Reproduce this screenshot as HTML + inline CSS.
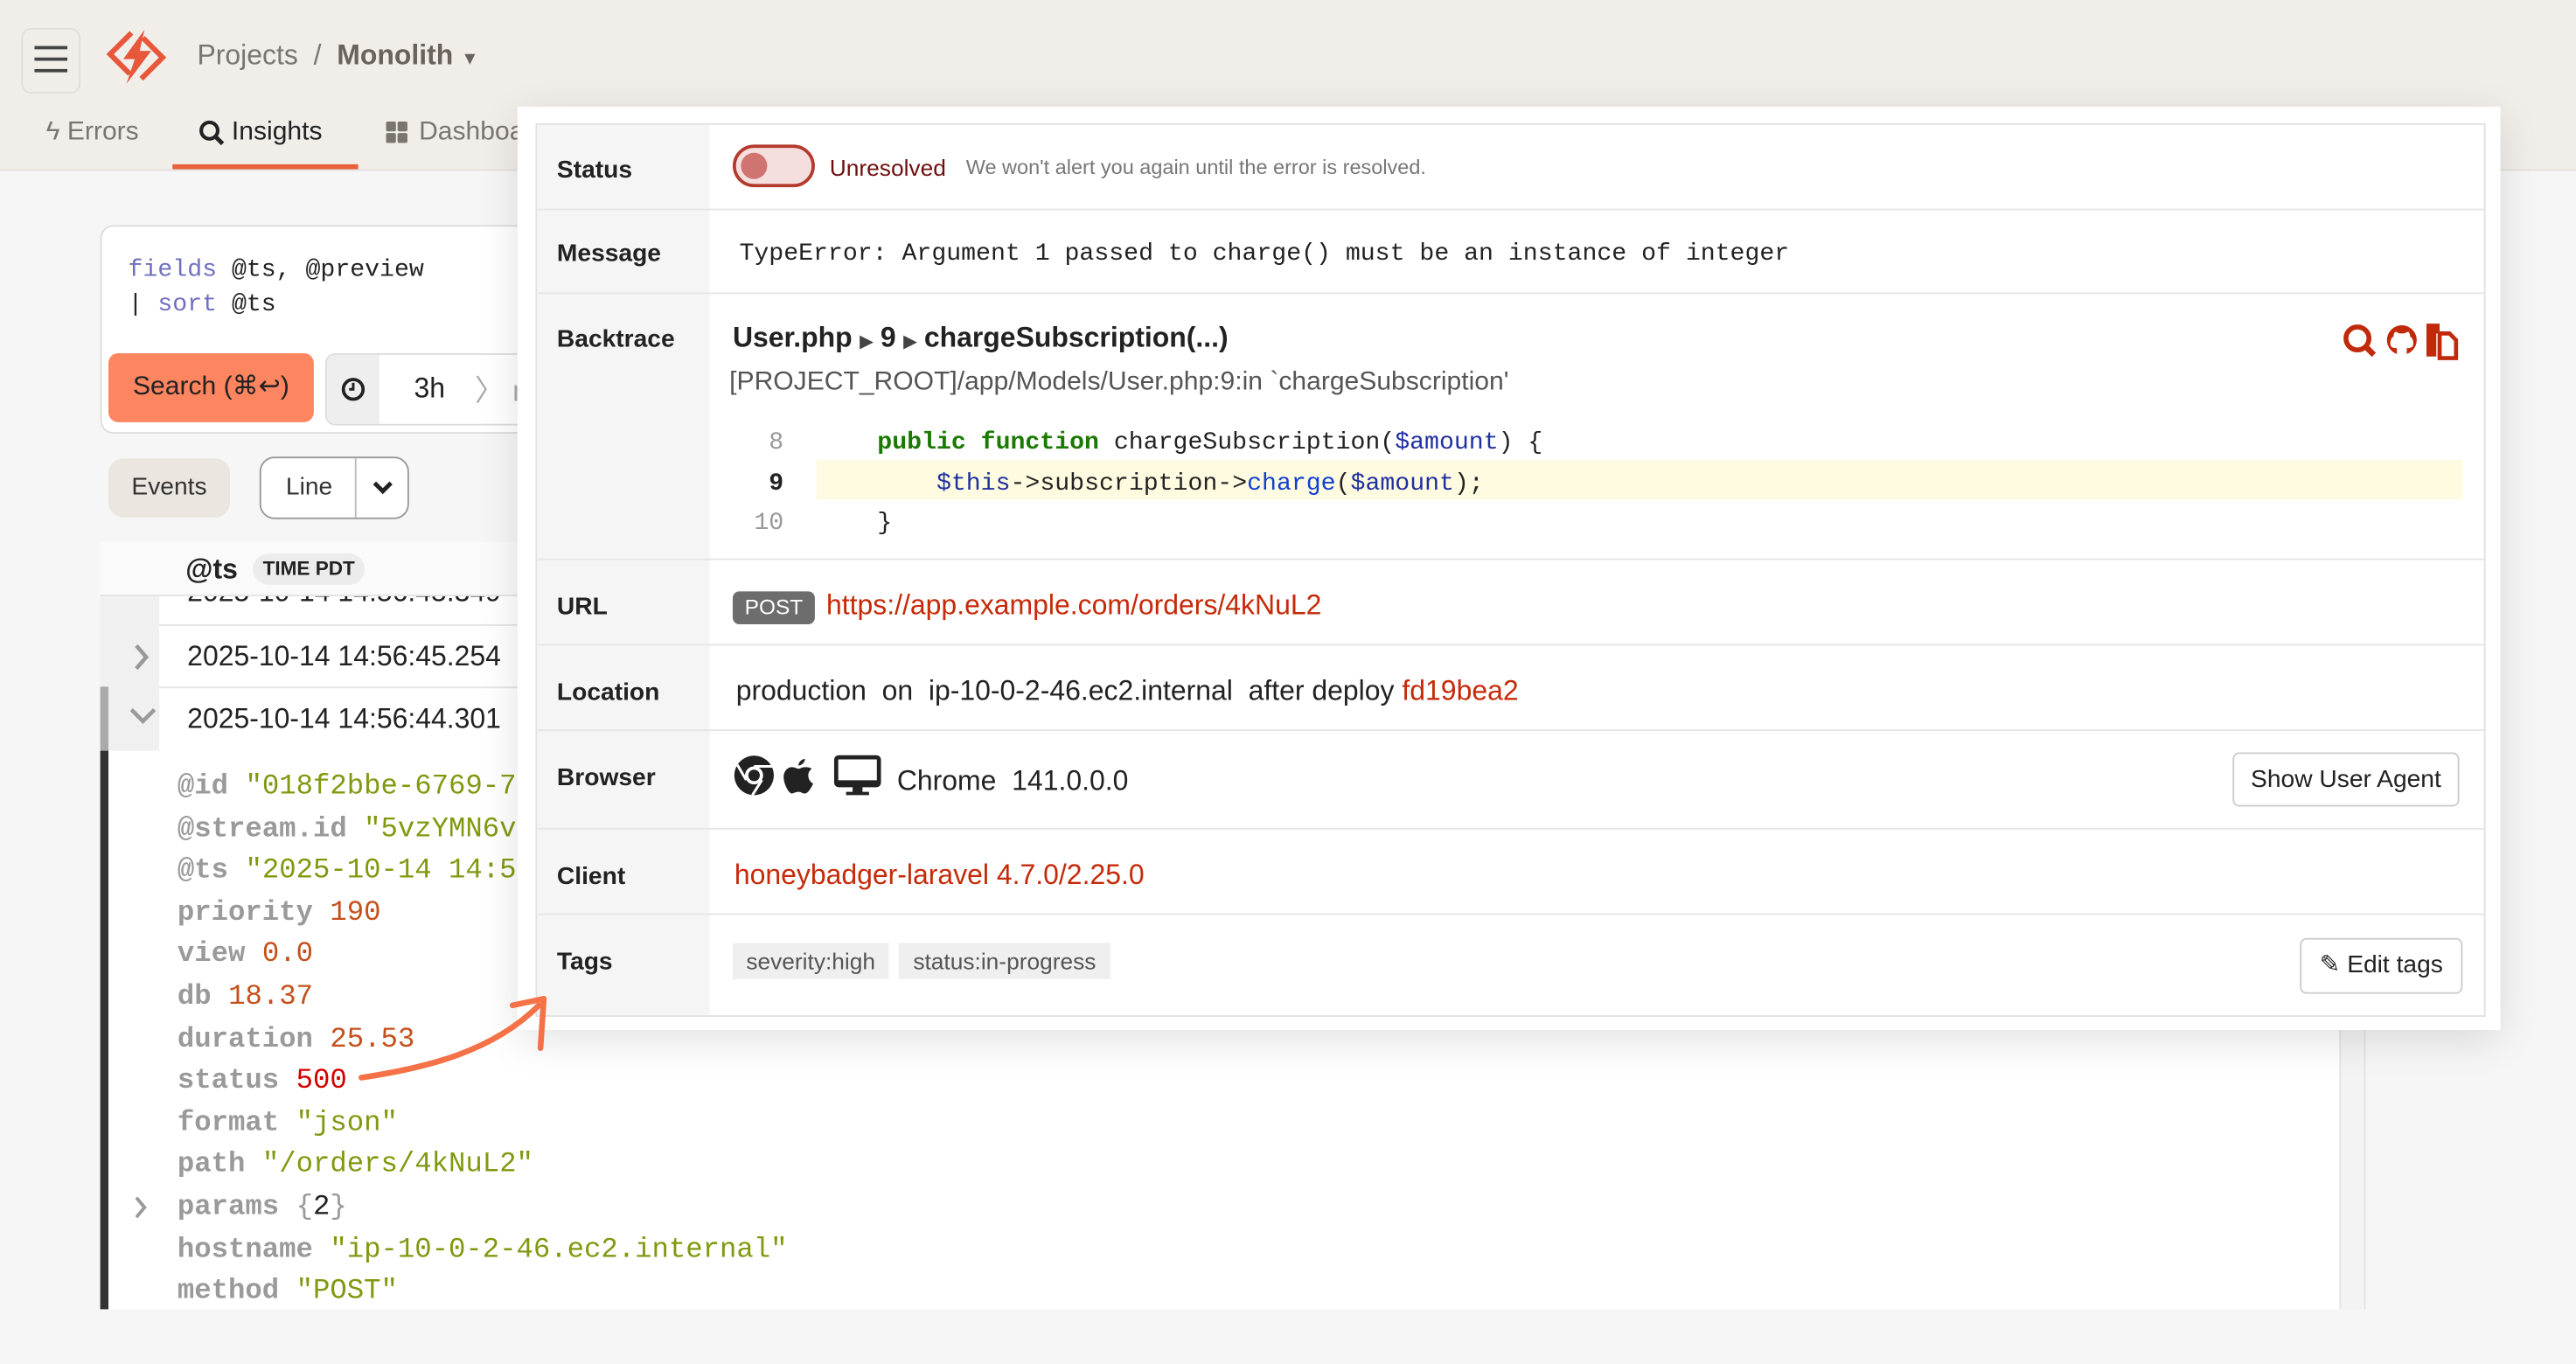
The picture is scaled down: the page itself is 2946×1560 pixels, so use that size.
<!DOCTYPE html>
<html><head><meta charset="utf-8">
<style>
html,body{margin:0;padding:0;width:2946px;height:1560px;overflow:hidden;background:#f6f6f6}
#w{position:absolute;left:0;top:0;width:1568px;height:830px;transform:scale(1.8788);transform-origin:0 0;font-family:"Liberation Sans",sans-serif;color:#222}
.a{position:absolute;white-space:nowrap}
.m{font-family:"Liberation Mono",monospace}
.lbl{position:absolute;left:12px;font-weight:bold;font-size:15px;color:#222}
.row{position:absolute;left:0;right:0;border-bottom:1px solid #e6e6e6}
.k{color:#9a9a9a;font-weight:bold}
.s{color:#7f9a10}
.n{color:#c4501c}
</style></head><body><div id="w">
<!-- header -->
<div class="a" style="left:0;top:0;width:1568px;height:103px;background:#f1eeea;border-bottom:1px solid #e4e0dc"></div>
<div class="a" style="left:13px;top:17px;width:34px;height:38px;border:1px solid #e2ddd8;border-radius:6px;background:#f1eeea"></div>
<div class="a" style="left:21px;top:28px;width:20px;height:2px;background:#444;box-shadow:0 7px 0 #444,0 14px 0 #444"></div>
<svg class="a" style="left:63px;top:14px" width="40" height="40" viewBox="0 0 40 40"><g fill="none" stroke="#e8573a" stroke-width="3.2" stroke-linejoin="miter"><path d="M17 6 L4 19 L16 31"/><path d="M23 34 L36 21 L24 9"/></g><path d="M25 4 L12 22 L19 22 L14 37 L29 17 L22 17 Z" fill="#e8573a"/></svg>
<div class="a" style="left:120px;top:24px;font-size:17px;color:#7b7570">Projects&nbsp; /&nbsp; <b style="color:#6b625c">Monolith</b> <span style="font-size:11px;color:#6b625c">▼</span></div>
<div class="a" style="left:28px;top:72px;font-size:16px;color:#7b7570">ϟ Errors</div>
<svg class="a" style="left:121px;top:73px" width="16" height="16" viewBox="0 0 16 16"><circle cx="6.5" cy="6.5" r="5" fill="none" stroke="#222" stroke-width="2.2"/><path d="M10 10 L14.5 14.5" stroke="#222" stroke-width="2.6"/></svg>
<div class="a" style="left:141px;top:72px;font-size:16px;color:#222">Insights</div>
<div class="a" style="left:105px;top:100px;width:113px;height:3px;background:#e8603c"></div>
<div class="a" style="left:235px;top:74px;width:6px;height:6px;background:#7b7570;border-radius:1px;box-shadow:7px 0 0 #7b7570,0 7px 0 #7b7570,7px 7px 0 #7b7570"></div>
<div class="a" style="left:255px;top:72px;font-size:16px;color:#7b7570">Dashboards</div>
<!-- query box -->
<div class="a" style="left:61px;top:137px;width:400px;height:125px;background:#fff;border:1px solid #ddd;border-radius:8px"></div>
<div class="a m" style="left:78px;top:154px;font-size:15px;line-height:21px;color:#222"><span style="color:#6f6fbf">fields</span> @ts, @preview<br>| <span style="color:#6f6fbf">sort</span> @ts</div>
<div class="a" style="left:66px;top:215px;width:125px;height:42px;background:#fd8560;border-radius:6px;font-size:16px;line-height:42px;text-align:center;color:#222">Search (⌘↩)</div>
<div class="a" style="left:198px;top:215px;width:200px;height:42px;border:1px solid #ddd;border-radius:6px;background:#fff;overflow:hidden"><div style="position:absolute;left:0;top:0;width:32px;height:42px;background:#eee"></div>
<svg style="position:absolute;left:8px;top:13px" width="16" height="16" viewBox="0 0 16 16"><circle cx="8" cy="8" r="6" fill="none" stroke="#222" stroke-width="2"/><path d="M8 4 V8 H5.5" stroke="#222" stroke-width="1.6" fill="none"/></svg>
<div style="position:absolute;left:53px;top:11px;font-size:17px">3h</div><div style="position:absolute;left:90px;top:8px;font-size:18px;color:#aaa">〉 n</div></div>
<div class="a" style="left:66px;top:279px;width:74px;height:36px;background:#ece6e0;border-radius:9px;font-size:15px;line-height:36px;text-align:center;color:#333">Events</div>
<div class="a" style="left:158px;top:278px;width:89px;height:36px;background:#fff;border:1px solid #999;border-radius:9px"><div style="position:absolute;left:15px;top:9px;font-size:15px;color:#333">Line</div><div style="position:absolute;left:57px;top:0;width:1px;height:36px;background:#bbb"></div><svg style="position:absolute;left:67px;top:12px" width="14" height="12" viewBox="0 0 14 12"><path d="M2 3 L7 8 L12 3" fill="none" stroke="#222" stroke-width="2.6"/></svg></div>
<!-- results -->
<div class="a" style="left:61px;top:330px;width:1363px;height:467px;background:#fff"></div>
<div class="a" style="left:1424px;top:330px;width:14px;height:467px;background:#f3f3f3;border-left:1px solid #e4e4e4;border-right:1px solid #e4e4e4"></div>
<div class="a" style="left:61px;top:330px;width:1363px;height:32px;background:#fafafa;border-bottom:1px solid #e4e4e4"></div>
<div class="a" style="left:113px;top:337px;font-size:17px;font-weight:bold">@ts</div>
<div class="a" style="left:154px;top:337px;width:68px;height:19px;background:#ececec;border-radius:10px;font-size:12px;font-weight:bold;line-height:19px;text-align:center">TIME PDT</div>
<div class="a" style="left:61px;top:363px;width:36px;height:94px;background:#f0f0f0"></div>
<div class="a" style="left:114px;top:363px;height:10px;overflow:hidden;width:250px"><div style="position:absolute;left:0;top:-12px;font-size:17px;line-height:20px">2025-10-14 14:56:45.349</div></div>
<div class="a" style="left:97px;top:380px;width:300px;height:1px;background:#e4e4e4"></div>
<div class="a" style="left:97px;top:418px;width:300px;height:1px;background:#e4e4e4"></div>
<svg class="a" style="left:80px;top:391px" width="12" height="18" viewBox="0 0 12 18"><path d="M3 2 L9 9 L3 16" fill="none" stroke="#999" stroke-width="2.4"/></svg>
<div class="a" style="left:114px;top:390px;font-size:17px">2025-10-14 14:56:45.254</div>
<div class="a" style="left:61px;top:418px;width:5px;height:39px;background:#aaa"></div>
<svg class="a" style="left:78px;top:430px" width="18" height="12" viewBox="0 0 18 12"><path d="M2 2 L9 9 L16 2" fill="none" stroke="#999" stroke-width="2.4"/></svg>
<div class="a" style="left:114px;top:428px;font-size:17px">2025-10-14 14:56:44.301</div>
<div class="a" style="left:61px;top:457px;width:5px;height:340px;background:#333"></div>
<div class="a m" style="left:108px;top:467px;font-size:17.2px;line-height:25.6px">
<span class="k">@id</span> <span class="s">"018f2bbe-6769-7c</span><br>
<span class="k">@stream.id</span> <span class="s">"5vzYMN6v</span><br>
<span class="k">@ts</span> <span class="s">"2025-10-14 14:5</span><br>
<span class="k">priority</span> <span class="n">190</span><br>
<span class="k">view</span> <span class="n">0.0</span><br>
<span class="k">db</span> <span class="n">18.37</span><br>
<span class="k">duration</span> <span class="n">25.53</span><br>
<span class="k">status</span> <span style="color:#d40000">500</span><br>
<span class="k">format</span> <span class="s">"json"</span><br>
<span class="k">path</span> <span class="s">"/orders/4kNuL2"</span><br>
<span class="k">params</span> <span style="color:#999">{</span>2<span style="color:#999">}</span><br>
<span class="k">hostname</span> <span class="s">"ip-10-0-2-46.ec2.internal"</span><br>
<span class="k">method</span> <span class="s">"POST"</span></div>
<svg class="a" style="left:80px;top:727px" width="12" height="16" viewBox="0 0 12 16"><path d="M3 2 L8 8 L3 14" fill="none" stroke="#999" stroke-width="2"/></svg>
<!-- panel -->
<div class="a" style="left:315px;top:65px;width:1207px;height:562px;background:#fff;box-shadow:0 6px 24px rgba(0,0,0,.12)"></div>
<div class="a" style="left:326px;top:75px;width:1185px;height:542px;border:1px solid #e2e2e2;overflow:hidden">
<div style="position:absolute;left:0;top:0;width:105px;height:542px;background:#f5f5f5"></div>
<div class="row" style="top:0;height:51px"><div class="lbl" style="top:19px">Status</div>
<div class="a" style="left:119px;top:12px;width:46px;height:22px;border:2px solid #b53a2e;border-radius:13px;background:#f5dede"></div>
<div class="a" style="left:124px;top:17px;width:16px;height:16px;border-radius:8px;background:#cf7470"></div>
<div class="a" style="left:178px;top:18px;font-size:14px;color:#6e1010">Unresolved</div>
<div class="a" style="left:261px;top:19px;font-size:12.5px;color:#777">We won't alert you again until the error is resolved.</div></div>
<div class="row" style="top:51px;height:51px"><div class="lbl" style="top:19px">Message</div>
<div class="a m" style="left:123px;top:19px;font-size:15px">TypeError: Argument 1 passed to charge() must be an instance of integer</div></div>
<div class="row" style="top:103px;height:161px"><div class="lbl" style="top:19px">Backtrace</div>
<div class="a" style="left:119px;top:17px;font-size:17px;font-weight:bold">User.php <span style="font-size:10px;color:#444">▶</span> 9 <span style="font-size:10px;color:#444">▶</span> chargeSubscription(...)</div>
<div class="a" style="left:117px;top:45px;font-size:16px;color:#555">[PROJECT_ROOT]/app/Models/User.php:9:in `chargeSubscription'</div>
<div class="a" style="left:170px;top:101px;width:1002px;height:24px;background:#fffbe0"></div>
<div class="a m" style="left:130px;top:79px;font-size:15px;line-height:24.5px;color:#999;text-align:right;width:20px">8<br><b style="color:#222">9</b><br>10</div>
<div class="a m" style="left:207px;top:79px;font-size:15px;line-height:24.5px;color:#222"><b style="color:#1a7a00">public function</b> chargeSubscription(<span style="color:#2030a0">$amount</span>) {<br>&nbsp;&nbsp;&nbsp;&nbsp;<span style="color:#2030a0">$this</span>-&gt;subscription-&gt;<span style="color:#1040d0">charge</span>(<span style="color:#2030a0">$amount</span>);<br>}</div>
<svg class="a" style="left:1098px;top:17px" width="76" height="24" viewBox="0 0 76 24"><g fill="#c0290a"><circle cx="10" cy="10" r="7" fill="none" stroke="#c0290a" stroke-width="3"/><path d="M14 14 L20 20" stroke="#c0290a" stroke-width="3.5"/><path d="M37 2 a9 9 0 0 0 -3 17.5 v-3.5 c-3 0 -4 -1 -4 -3 c0 -2 1 -4 2 -4 c0 -1 0 -2 1 -3 c1 0 2 1 3 1 c1 0 2 0 2 0 c1 0 2 -1 3 -1 c1 1 1 2 1 3 c1 0 2 2 2 4 c0 2 -1 3 -4 3 v3.5 A9 9 0 0 0 37 2z"/><path d="M52 1 h8 v6 h-8z M52 7 h6 v14 h-6z"/><path d="M60 7 h6 l4 4 v11 h-10z" fill="none" stroke="#c0290a" stroke-width="2.5"/></g></svg></div>
<div class="row" style="top:265px;height:51px"><div class="lbl" style="top:20px">URL</div>
<div class="a" style="left:119px;top:19px;width:50px;height:20px;background:#6d6d6d;border-radius:4px;color:#fff;font-size:13px;line-height:20px;text-align:center">POST</div>
<div class="a" style="left:176px;top:18px;font-size:17px;color:#c62a08">https://app.example.com/orders/4kNuL2</div></div>
<div class="row" style="top:317px;height:51px"><div class="lbl" style="top:20px">Location</div>
<div class="a" style="left:121px;top:18px;font-size:17px">production&nbsp; on&nbsp; ip-10-0-2-46.ec2.internal&nbsp; after deploy <span style="color:#c62a08">fd19bea2</span></div></div>
<div class="row" style="top:369px;height:59px"><div class="lbl" style="top:20px">Browser</div>
<svg class="a" style="left:119px;top:14px" width="92" height="28" viewBox="0 0 92 28"><circle cx="13" cy="13" r="12" fill="#222"/><circle cx="13" cy="13" r="5.5" fill="#fff"/><circle cx="13" cy="13" r="3.5" fill="#222"/><path d="M13 7.5 H24 M8.2 15.8 L2.8 6.5 M17.8 15.8 L12 25" stroke="#fff" stroke-width="1.6"/><path d="M44 8 c-2 0 -3 1 -4 1 c-1 0 -2 -1 -4 -1 c-3 0 -5 3 -5 6 c0 4 3 10 5 10 c1 0 2 -1 4 -1 c2 0 2 1 4 1 c2 0 4 -4 5 -6 c-2 -1 -3 -3 -3 -5 c0 -2 1 -3 2 -4 c-1 -1 -3 -1 -4 -1z M40 7 c0 -2 2 -4 4 -4 c0 2 -2 4 -4 4z" fill="#222"/><rect x="63" y="2" width="26" height="17" rx="1.5" fill="none" stroke="#222" stroke-width="2.5"/><path d="M64 16 H88 V19 H64z M73 19 h6 v4 h4 v2 h-14 v-2 h4z" fill="#222"/></svg>
<div class="a" style="left:219px;top:21px;font-size:17px">Chrome&nbsp; 141.0.0.0</div>
<div class="a" style="left:1032px;top:13px;width:136px;height:31px;border:1px solid #ccc;border-radius:4px;font-size:15px;line-height:31px;text-align:center">Show User Agent</div></div>
<div class="row" style="top:429px;height:51px"><div class="lbl" style="top:20px">Client</div>
<div class="a" style="left:120px;top:18px;font-size:17px;color:#c62a08">honeybadger-laravel 4.7.0/2.25.0</div></div>
<div class="row" style="top:481px;height:61px;border:0"><div class="lbl" style="top:20px">Tags</div>
<div class="a" style="left:119px;top:17px;width:95px;height:22px;background:#efefef;font-size:14px;line-height:22px;text-align:center;color:#555">severity:high</div>
<div class="a" style="left:220px;top:17px;width:129px;height:22px;background:#efefef;font-size:14px;line-height:22px;text-align:center;color:#555">status:in-progress</div>
<div class="a" style="left:1073px;top:14px;width:97px;height:32px;border:1px solid #ccc;border-radius:4px;font-size:15px;line-height:32px;text-align:center">✎ Edit tags</div></div>
</div>
<svg class="a" style="left:215px;top:600px" width="125" height="65" viewBox="0 0 125 65"><path d="M5 56 C45 50 85 40 113 12" fill="none" stroke="#f57147" stroke-width="3.5" stroke-linecap="round"/><path d="M97 12 L116 8 L114 38" fill="none" stroke="#f57147" stroke-width="3.5" stroke-linecap="round" stroke-linejoin="round"/></svg>
</div></body></html>
